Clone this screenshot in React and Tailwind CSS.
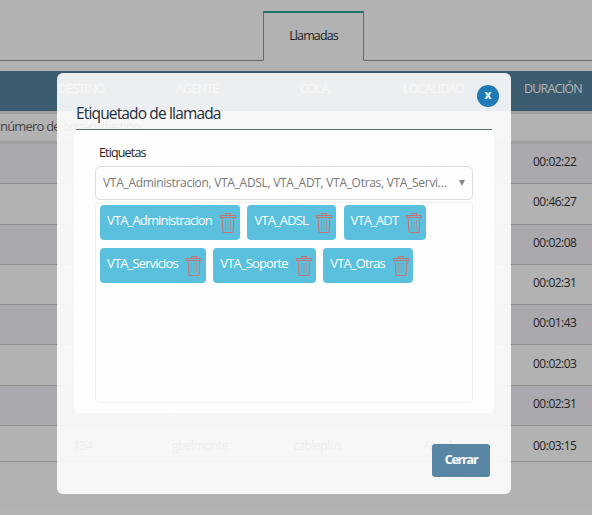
import { useState } from "react";

const rows = [
  { dest: "134", agent: "gbelmonte", queue: "cableplus", place: "Ancol", time: "00:02:22", dark: true },
  { dest: "134", agent: "gbelmonte", queue: "cableplus", place: "Ancol", time: "00:46:27", dark: false },
  { dest: "134", agent: "gbelmonte", queue: "cableplus", place: "Ancol", time: "00:02:08", dark: true },
  { dest: "134", agent: "gbelmonte", queue: "cableplus", place: "Ancol", time: "00:02:31", dark: false },
  { dest: "134", agent: "gbelmonte", queue: "cableplus", place: "Ancol", time: "00:01:43", dark: true },
  { dest: "134", agent: "gbelmonte", queue: "cableplus", place: "Ancol", time: "00:02:03", dark: false },
  { dest: "134", agent: "gbelmonte", queue: "cableplus", place: "Ancol", time: "00:02:31", dark: true },
  { dest: "134", agent: "gbelmonte", queue: "cableplus", place: "Ancol", time: "00:03:15", dark: false },
];

const firstTags = ["VTA_Administracion", "VTA_ADSL", "VTA_ADT"];
const secondTags = ["VTA_Servicios", "VTA_Soporte", "VTA_Otras"];

function TrashIcon() {
  return (
    <svg width="16" height="20" viewBox="0 0 16 20" fill="none" stroke="#c8736f" strokeWidth="1" className="ml-[8px] shrink-0">
      <path d="M5.5 2.5V0.5H10.5V2.5" />
      <path d="M0.5 2.5H15.5V4.5H0.5Z" />
      <path d="M2 4.5L3 19.5H13L14 4.5" />
      <path d="M5.5 7V17M8 7V17M10.5 7V17" stroke="#8f9ca6" />
    </svg>
  );
}

function Tag({ label }) {
  return (
    <div className="flex h-[35px] items-center rounded-[4px] bg-[#5bc0de] pl-[7px] pr-[4px] text-[13px] tracking-[-0.85px] text-white">
      <span className="-mt-[3px]">{label}</span>
      <TrashIcon />
    </div>
  );
}

export default function App() {
  const [open] = useState(true);

  return (
    <div className="relative h-[515px] w-[592px] overflow-hidden bg-white font-['Open_Sans',sans-serif] text-[#333]">
      {/* Tabs */}
      <div className="flex h-[61px] items-end border-b border-[#999] pt-[11px]">
        <div className="ml-[263px] -mb-px flex h-[50px] w-[101px] items-center justify-center border-x border-t-2 border-x-[#999] border-t-[#2ba58e] border-b border-b-white bg-white text-[12.5px] tracking-[-0.87px]">
          Llamadas
        </div>
      </div>

      {/* Table */}
      <div className="mt-[10px]">
        <div className="grid h-[43px] grid-cols-[135px_103px_122px_108px_1fr] items-center border-b-[3px] border-[#e5e5e5] bg-[#57849f] pb-[3px] text-[12.5px] tracking-[-0.8px] text-white">
          <span className="pl-[58px]">DESTINO</span>
          <span className="pl-[41px]">AGENTE</span>
          <span className="pl-[62px]">COLA</span>
          <span className="pl-[43px] whitespace-nowrap">LOCALIDAD</span>
          <span className="pl-[56px] whitespace-nowrap">DURACIÓN</span>
        </div>
        <div className="flex h-[30px] items-center border-b-[3px] border-[#e5e5e5] pb-[2px] text-[13px] tracking-[-0.8px] text-[#666]">
          número de origen/destino
        </div>
        {rows.map((row, i) => (
          <div
            key={i}
            className={`grid grid-cols-[135px_103px_122px_108px_1fr] items-center border-b border-[#ccc] text-[12px] tracking-[-0.5px] text-[#666] ${
              i === 7 ? "h-[35.5px] pt-[5px]" : "h-[40.3px] pb-[3px]"
            } ${row.dark ? "bg-[#f5f3fa]" : "bg-white"}`}
          >
            <span className="pl-[73px]">{row.dest}</span>
            <span className="pl-[37px]">{row.agent}</span>
            <span className="pl-[55px]">{row.queue}</span>
            <span className="pl-[63px]">{row.place}</span>
            <span className="pl-[65px] text-[#333]">{row.time}</span>
          </div>
        ))}
      </div>

      {/* Backdrop */}
      <div className="absolute inset-0 bg-black/30" />

      {/* Modal */}
      {open && (
        <div className="absolute left-[57px] top-[73px] flex h-[421px] w-[454px] flex-col rounded-[6px] bg-white/90 px-[17px]">
          <button className="absolute right-[12px] top-[12px] flex h-[22px] w-[22px] items-center justify-center rounded-full bg-[#1f7ab5] pb-[2px] text-[12px] font-bold leading-none text-white">
            x
          </button>
          <div className="mx-[2px] mt-[28px] h-[29px] border-b border-[#5a6b78] text-[15.5px] leading-[24px] tracking-[-0.85px] text-[#1f2d3a]">
            Etiquetado de llamada
          </div>
          <div className="flex h-[283px] flex-col rounded-[6px] bg-white/90 px-[21px] pt-[15px]">
            <label className="pl-[4px] text-[12.5px] leading-[16px] tracking-[-0.85px] text-[#222]">Etiquetas</label>
            <div className="mt-[5px] flex h-[34px] items-center justify-between rounded-[5px] border border-[#ddd] pl-[7px] pr-[7px] text-[12px] tracking-[-0.3px] text-[#777]">
              <span className="truncate">VTA_Administracion, VTA_ADSL, VTA_ADT, VTA_Otras, VTA_Servi…</span>
              <span className="ml-[8px] h-0 w-0 shrink-0 border-x-[3.5px] border-t-[6px] border-x-transparent border-t-[#888]" />
            </div>
            <div className="mt-[2px] mb-[10px] flex flex-1 flex-col gap-[8px] rounded-[4px] border border-[#f0f0f0] px-[4px] pt-[2px]">
              <div className="flex gap-[7.5px]">
                {firstTags.map((t) => (
                  <Tag key={t} label={t} />
                ))}
              </div>
              <div className="flex gap-[7.5px]">
                {secondTags.map((t) => (
                  <Tag key={t} label={t} />
                ))}
              </div>
            </div>
          </div>
          <div className="mt-[31px] flex justify-end pr-[4px]">
            <button className="h-[33px] w-[58px] rounded-[3px] bg-[#5a86a6] text-[12.5px] font-bold tracking-[-1.2px] text-white">
              Cerrar
            </button>
          </div>
        </div>
      )}
    </div>
  );
}
